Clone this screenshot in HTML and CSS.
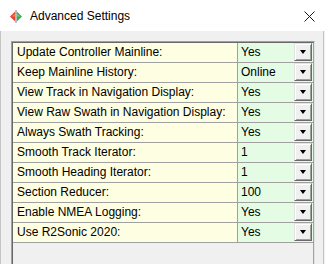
FILE: index.html
```html
<!DOCTYPE html>
<html>
<head>
<meta charset="utf-8">
<link rel="stylesheet" href="styles.css">
</head>
<body>
<div class="window">
  <div class="titlebar">
    <svg class="appicon" width="12" height="13" viewBox="0 0 12 13">
      <polygon points="0,6.5 5.2,1.5 5.2,11.5" fill="#e8402c"/>
      <polygon points="1.5,6.5 5.2,3.5 5.2,6.5" fill="#f47a5c"/>
      <polygon points="12,6.5 6.8,1.5 6.8,11.5" fill="#2fb344"/>
      <polygon points="10.5,6.5 6.8,3.5 6.8,6.5" fill="#6fd36c"/>
      <rect x="5.3" y="0" width="1.4" height="13" fill="#9aa3b5"/>
    </svg>
    <span class="title">Advanced Settings</span>
    <svg class="close" width="11" height="11" viewBox="0 0 11 11">
      <path d="M0.5 0.5 L10.5 10.5 M10.5 0.5 L0.5 10.5" stroke="#1a1a1a" stroke-width="1" fill="none"/>
    </svg>
  </div>
  <div class="content">
    <div class="gridouter">
      <div class="grid">
        <div class="row"><div class="label">Update Controller Mainline:</div><div class="value"><span class="vtext">Yes</span><span class="btn"><span class="arrow"></span></span></div></div>
        <div class="row"><div class="label">Keep Mainline History:</div><div class="value"><span class="vtext">Online</span><span class="btn"><span class="arrow"></span></span></div></div>
        <div class="row"><div class="label">View Track in Navigation Display:</div><div class="value"><span class="vtext">Yes</span><span class="btn"><span class="arrow"></span></span></div></div>
        <div class="row"><div class="label">View Raw Swath in Navigation Display:</div><div class="value"><span class="vtext">Yes</span><span class="btn"><span class="arrow"></span></span></div></div>
        <div class="row"><div class="label">Always Swath Tracking:</div><div class="value"><span class="vtext">Yes</span><span class="btn"><span class="arrow"></span></span></div></div>
        <div class="row"><div class="label">Smooth Track Iterator:</div><div class="value"><span class="vtext">1</span><span class="btn"><span class="arrow"></span></span></div></div>
        <div class="row"><div class="label">Smooth Heading Iterator:</div><div class="value"><span class="vtext">1</span><span class="btn"><span class="arrow"></span></span></div></div>
        <div class="row"><div class="label">Section Reducer:</div><div class="value"><span class="vtext">100</span><span class="btn"><span class="arrow"></span></span></div></div>
        <div class="row"><div class="label">Enable NMEA Logging:</div><div class="value"><span class="vtext">Yes</span><span class="btn"><span class="arrow"></span></span></div></div>
        <div class="row"><div class="label">Use R2Sonic 2020:</div><div class="value"><span class="vtext">Yes</span><span class="btn"><span class="arrow"></span></span></div></div>
      </div>
    </div>
  </div>
</div>
</body>
</html>
```

FILE: styles.css
```css
html, body {
  margin: 0;
  padding: 0;
  background: #f0f0f0;
  overflow: hidden;
}
.window {
  width: 325px;
  height: 264px;
  display: flex;
  flex-direction: column;
  font-family: "Liberation Sans", Arial, sans-serif;
  font-size: 12px;
  color: #000;
}
.titlebar {
  height: 31px;
  flex: none;
  background: #ffffff;
  display: flex;
  align-items: center;
  padding-left: 10px;
  padding-right: 10px;
  box-sizing: border-box;
}
.appicon {
  flex: none;
  margin-top: 1px;
}
.title {
  margin-left: 8px;
  font-size: 12px;
  flex: 1;
  padding-top: 1px;
}
.close {
  flex: none;
  margin-top: 1px;
}
.content {
  flex: 1;
  border-left: 1px solid #c4c4c4;
  border-right: 1px solid #c4c4c4;
  margin-right: 1px;
  padding: 10px 8px 0 10px;
  box-sizing: border-box;
  display: flex;
  flex-direction: column;
}
.gridouter {
  flex: 1;
  border-top: 1px solid #a0a0a0;
  border-left: 1px solid #a0a0a0;
  border-right: 1px solid #e3e3e3;
}
.grid {
  height: 100%;
  border-top: 1px solid #696969;
  border-left: 1px solid #696969;
  border-right: 1px solid #a0a0a0;
  background: #f0f0f0;
}
.row {
  display: flex;
  height: 19px;
  border-bottom: 1px solid #a0a0a0;
}
.label {
  width: 224px;
  flex: none;
  background: #fefee3;
  border-right: 1px solid #a0a0a0;
  padding-left: 4px;
  box-sizing: border-box;
  width: 225px;
  line-height: 19px;
  white-space: nowrap;
  overflow: hidden;
}
.value {
  flex: 1;
  background: #e4fbe4;
  display: flex;
  align-items: flex-start;
}
.vtext {
  flex: 1;
  padding-left: 3px;
  line-height: 19px;
}
.btn {
  flex: none;
  width: 18px;
  height: 18px;
  box-sizing: border-box;
  background: #f0f0f0;
  border-top: 1px solid #e3e3e3;
  border-left: 1px solid #e3e3e3;
  border-right: 1px solid #696969;
  border-bottom: 1px solid #696969;
  box-shadow: inset 1px 1px 0 #ffffff, inset -1px -1px 0 #a0a0a0;
  display: flex;
  align-items: center;
  justify-content: center;
  margin-right: 1px;
}
.arrow {
  width: 0;
  height: 0;
  border-left: 3.5px solid transparent;
  border-right: 3.5px solid transparent;
  border-top: 4px solid #000;
}
```
